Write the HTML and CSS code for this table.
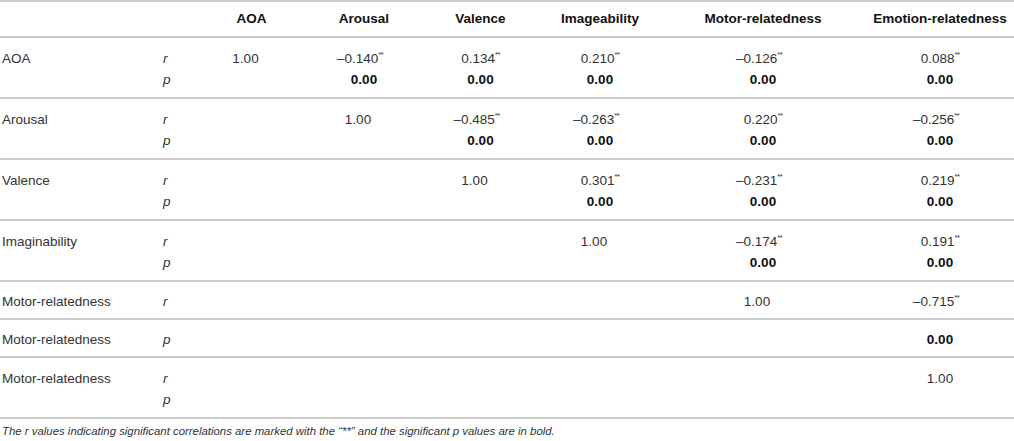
FILE: index.html
```html
<!DOCTYPE html>
<html>
<head>
<meta charset="utf-8">
<link rel="stylesheet" href="styles.css">
</head>
<body>
<div class="wrap">
<table class="corr">
  <colgroup>
    <col class="c-label"><col class="c-rp"><col class="c-aoa"><col class="c-aro"><col class="c-val"><col class="c-img"><col class="c-mot"><col class="c-emo">
  </colgroup>
  <thead>
    <tr>
      <th></th><th></th><th>AOA</th><th>Arousal</th><th>Valence</th><th>Imageability</th><th>Motor-relatedness</th><th>Emotion-relatedness</th>
    </tr>
  </thead>
  <tbody>
    <tr class="two">
      <td class="lbl">AOA</td>
      <td class="rp"><div>r</div><div>p</div></td>
      <td class="v"><div class="unit">1.00</div></td>
      <td class="v"><div><span class="neg">–</span>0.140<sup>**</sup></div><div class="b">0.00</div></td>
      <td class="v"><div>0.134<sup>**</sup></div><div class="b">0.00</div></td>
      <td class="v"><div>0.210<sup>**</sup></div><div class="b">0.00</div></td>
      <td class="v"><div><span class="neg">–</span>0.126<sup>**</sup></div><div class="b">0.00</div></td>
      <td class="v"><div>0.088<sup>**</sup></div><div class="b">0.00</div></td>
    </tr>
    <tr class="two">
      <td class="lbl">Arousal</td>
      <td class="rp"><div>r</div><div>p</div></td>
      <td class="v"></td>
      <td class="v"><div class="unit">1.00</div></td>
      <td class="v"><div><span class="neg">–</span>0.485<sup>**</sup></div><div class="b">0.00</div></td>
      <td class="v"><div><span class="neg">–</span>0.263<sup>**</sup></div><div class="b">0.00</div></td>
      <td class="v"><div>0.220<sup>**</sup></div><div class="b">0.00</div></td>
      <td class="v"><div><span class="neg">–</span>0.256<sup>**</sup></div><div class="b">0.00</div></td>
    </tr>
    <tr class="two">
      <td class="lbl">Valence</td>
      <td class="rp"><div>r</div><div>p</div></td>
      <td class="v"></td>
      <td class="v"></td>
      <td class="v"><div class="unit">1.00</div></td>
      <td class="v"><div>0.301<sup>**</sup></div><div class="b">0.00</div></td>
      <td class="v"><div><span class="neg">–</span>0.231<sup>**</sup></div><div class="b">0.00</div></td>
      <td class="v"><div>0.219<sup>**</sup></div><div class="b">0.00</div></td>
    </tr>
    <tr class="two">
      <td class="lbl">Imaginability</td>
      <td class="rp"><div>r</div><div>p</div></td>
      <td class="v"></td>
      <td class="v"></td>
      <td class="v"></td>
      <td class="v"><div class="unit">1.00</div></td>
      <td class="v"><div><span class="neg">–</span>0.174<sup>**</sup></div><div class="b">0.00</div></td>
      <td class="v"><div>0.191<sup>**</sup></div><div class="b">0.00</div></td>
    </tr>
    <tr class="one">
      <td class="lbl">Motor-relatedness</td>
      <td class="rp"><div>r</div></td>
      <td class="v"></td>
      <td class="v"></td>
      <td class="v"></td>
      <td class="v"></td>
      <td class="v"><div class="unit">1.00</div></td>
      <td class="v"><div><span class="neg">–</span>0.715<sup>**</sup></div></td>
    </tr>
    <tr class="one">
      <td class="lbl">Motor-relatedness</td>
      <td class="rp"><div>p</div></td>
      <td class="v"></td>
      <td class="v"></td>
      <td class="v"></td>
      <td class="v"></td>
      <td class="v"></td>
      <td class="v"><div class="b">0.00</div></td>
    </tr>
    <tr class="two">
      <td class="lbl">Motor-relatedness</td>
      <td class="rp"><div>r</div><div>p</div></td>
      <td class="v"></td>
      <td class="v"></td>
      <td class="v"></td>
      <td class="v"></td>
      <td class="v"></td>
      <td class="v"><div>1.00</div></td>
    </tr>
  </tbody>
</table>
<p class="note">The <i>r</i> values indicating significant correlations are marked with the “**” and the significant <i>p</i> values are in bold.</p>
</div>
</body>
</html>
```

FILE: styles.css
```css
html, body {
  margin: 0;
  padding: 0;
  background: #ffffff;
}
body {
  font-family: "Liberation Sans", Arial, sans-serif;
  color: #333333;
  font-size: 13.5px;
}
.wrap {
  width: 1014px;
}
.corr {
  width: 1014px;
  border-collapse: collapse;
  table-layout: fixed;
  border-top: 2px solid #cccccc;
}
.c-label { width: 155px; }
.c-rp { width: 41px; }
.c-aoa { width: 111px; }
.c-aro { width: 114px; }
.c-val { width: 119px; }
.c-img { width: 120px; }
.c-mot { width: 206px; }
.c-emo { width: 148px; }

.corr th {
  font-weight: bold;
  color: #111111;
  text-align: center;
  line-height: 21px;
  padding: 6px 0 7px;
  border-bottom: 2px solid #cccccc;
  white-space: nowrap;
}
.corr td {
  vertical-align: top;
  line-height: 21px;
  border-bottom: 2px solid #cccccc;
  padding: 0;
  white-space: nowrap;
}
.corr tr.two td {
  padding-top: 10px;
  padding-bottom: 7px;
  height: 42px;
}
.corr tr.one td {
  padding-top: 9px;
  padding-bottom: 6px;
  height: 21px;
}
.corr td.lbl {
  padding-left: 2px;
  text-align: left;
}
.corr td.rp {
  font-style: italic;
  padding-left: 8px;
}
.corr td.v {
  text-align: center;
}
.corr .unit {
  padding-right: 12px;
}
.corr .neg {
  margin-left: -8px;
}
.corr .b {
  font-weight: bold;
  color: #111111;
}
.corr sup {
  font-size: 7.5px;
  line-height: 0;
  vertical-align: 6px;
  letter-spacing: -0.5px;
}
.note {
  margin: 0;
  padding: 5px 0 0 2px;
  font-size: 11.4px;
  line-height: 14px;
  font-style: italic;
  color: #333333;
}
```
